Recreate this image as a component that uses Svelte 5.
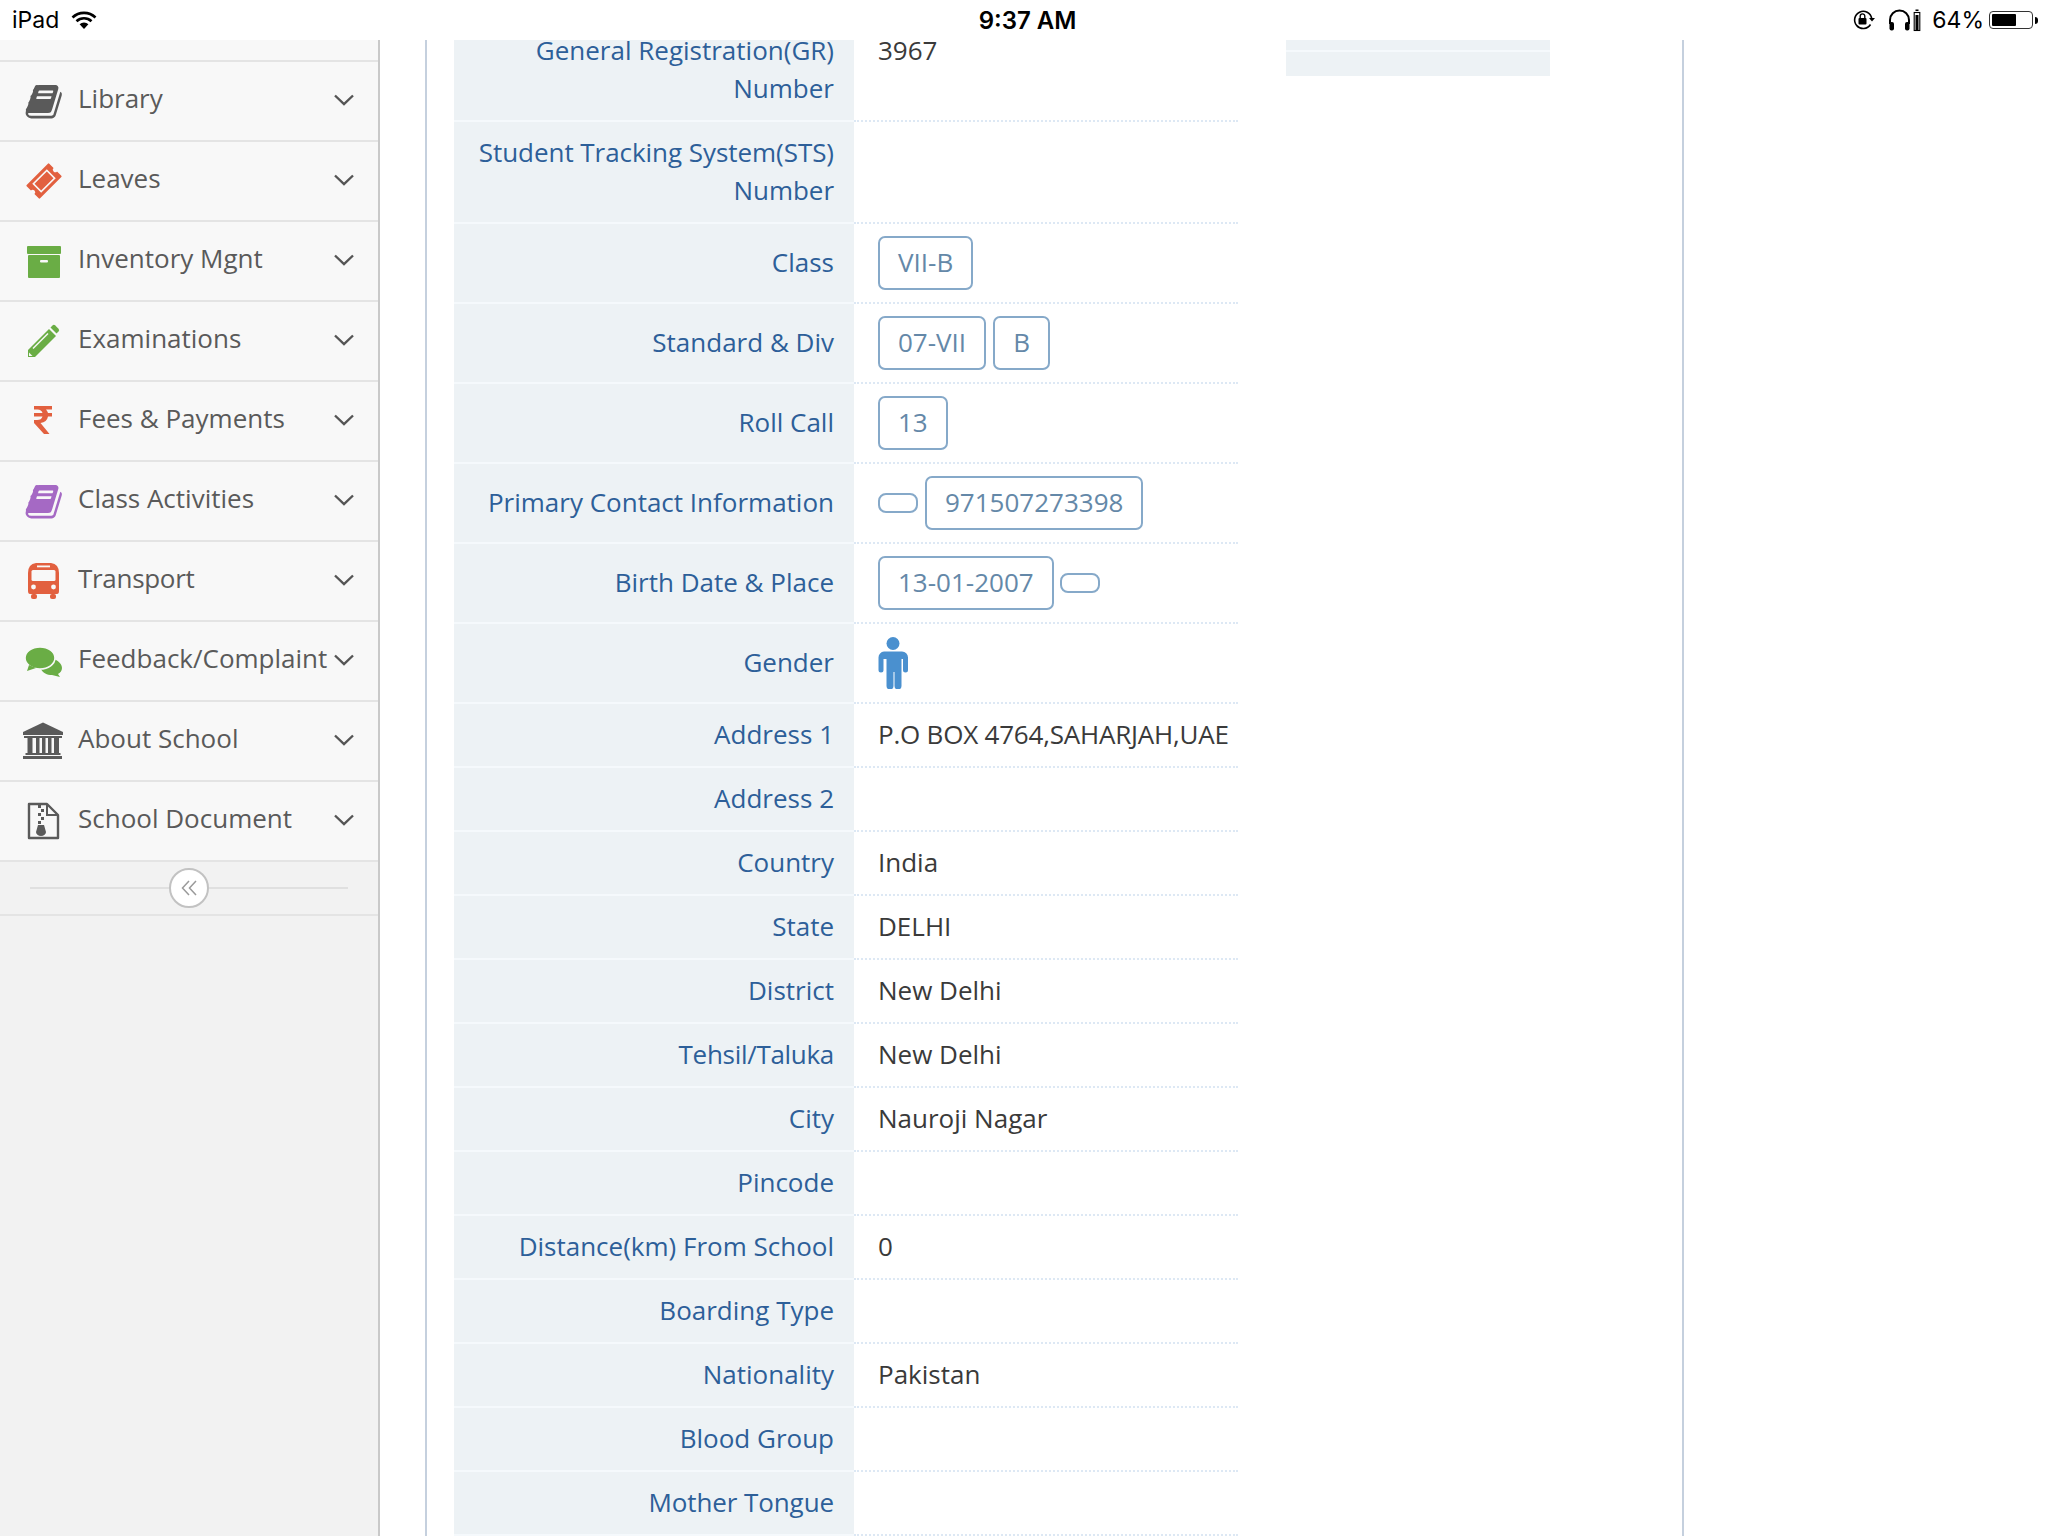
<script lang="ts">
  const menu = [
    { label: 'Library', icon: 'book', color: '#5a5a5a' },
    { label: 'Leaves', icon: 'ticket', color: '#e2603f' },
    { label: 'Inventory Mgnt', icon: 'archive', color: '#6aad45' },
    { label: 'Examinations', icon: 'pencil', color: '#6aad45' },
    { label: 'Fees & Payments', icon: 'inr', color: '#e2603f' },
    { label: 'Class Activities', icon: 'book', color: '#a569c4' },
    { label: 'Transport', icon: 'bus', color: '#e2603f', ls: '-.3px' },
    { label: 'Feedback/Complaint', icon: 'comments', color: '#6aad45' },
    { label: 'About School', icon: 'bank', color: '#5a5a5a' },
    { label: 'School Document', icon: 'zip', color: '#5a5a5a' }
  ];

  const rows = [
    { label: ['General Registration(GR)', 'Number'], value: '3967' },
    { label: ['Student Tracking System(STS)', 'Number'], ls: '-.05px' },
    { label: ['Class'], tags: ['VII-B'] },
    { label: ['Standard & Div'], tags: ['07-VII', 'B'] },
    { label: ['Roll Call'], tags: ['13'] },
    { label: ['Primary Contact Information'], tags: ['', '971507273398'] },
    { label: ['Birth Date & Place'], tags: ['13-01-2007', ''] },
    { label: ['Gender'], male: true },
    { label: ['Address 1'], value: 'P.O BOX 4764,SAHARJAH,UAE', vls: '-.21px' },
    { label: ['Address 2'] },
    { label: ['Country'], value: 'India' },
    { label: ['State'], value: 'DELHI' },
    { label: ['District'], value: 'New Delhi' },
    { label: ['Tehsil/Taluka'], value: 'New Delhi', ls: '-.3px' },
    { label: ['City'], value: 'Nauroji Nagar' },
    { label: ['Pincode'] },
    { label: ['Distance(km) From School'], value: '0' },
    { label: ['Boarding Type'] },
    { label: ['Nationality'], value: 'Pakistan' },
    { label: ['Blood Group'] },
    { label: ['Mother Tongue'], ls: '-.1px' }
  ];
</script>

<div class="page">
  <header class="status">
    <div class="st-left">
      <span>iPad</span>
      <svg class="wifi" width="26" height="20" viewBox="0 0 26 20">
        <path d="M1.5 7.5a16.5 16.5 0 0 1 23 0M5.5 11.2a11 11 0 0 1 15 0" fill="none" stroke="#000" stroke-width="2.6"/>
        <path d="M8.6 14.2a6.4 6.4 0 0 1 8.8 0L13 19z" fill="#000"/>
      </svg>
    </div>
    <div class="st-time">9:37 AM</div>
    <div class="st-right">
      <svg width="24" height="22" viewBox="0 0 24 22">
        <path d="M18.5 15.5a8.6 8.6 0 1 1 1.2-6" fill="none" stroke="#000" stroke-width="1.6"/>
        <path d="M17 9h6l-3 3.4z" fill="#000"/>
        <rect x="6.5" y="9" width="8" height="6.5" rx="1" fill="#000"/>
        <path d="M8.2 9V7.2a2.3 2.3 0 0 1 4.6 0V9" fill="none" stroke="#000" stroke-width="1.4"/>
      </svg>
      <svg class="phones" width="33" height="24" viewBox="0 0 33 24">
        <path d="M2 16v-4a9.5 9.5 0 0 1 19 0v4" fill="none" stroke="#000" stroke-width="2"/>
        <rect x="1.5" y="14" width="4.5" height="8.5" rx="2" fill="#000"/>
        <rect x="17" y="14" width="4.5" height="8.5" rx="2" fill="#000"/>
        <rect x="26.2" y="4.5" width="5.6" height="18" fill="none" stroke="#000" stroke-width="1.1"/>
        <rect x="27.5" y="7" width="3" height="15" fill="#000"/>
        <rect x="27.5" y="1.5" width="3" height="1.5" fill="#000"/>
      </svg>
      <span class="pct">64%</span>
      <div class="battery"><div class="charge" style="width: 64%"></div></div>
      <div class="tip"></div>
    </div>
  </header>

  <div class="main">
    <aside class="sidebar">
      <div class="top-spacer"></div>
      {#each menu as m}
        <div class="item">
          <svg class="ic" width="40" height="40" viewBox="0 0 40 40" fill={m.color}>
            {#if m.icon === 'book'}
              <path transform="translate(1.6 1.2) scale(.0218)" d="M1639 478q40 57 18 129l-275 906q-19 64-76.5 107.5t-122.5 43.5h-923q-77 0-148.5-53.5t-99.5-131.5q-24-67-2-127 0-4 3-27t4-37q1-8-3-21.5t-3-19.5q2-11 8-21t16.5-23.5 16.5-23.5q23-38 45-91.5t30-91.5q3-10 .5-30t-.5-28q3-11 17-28t17-23q21-36 42-92t25-90q1-9-2.5-32t.5-28q4-13 22-30.5t22-22.5q19-26 42.5-84.5t27.5-96.5q1-8-3-25.5t-2-26.5q2-8 9-18t18-23 17-21q8-12 16.5-30.5t15-35 16-36 19.5-32 26.5-23.5 36-11.5 47.5 5.5l-1 3q38-9 51-9h761q74 0 114 56t18 130l-274 906q-36 119-71.5 153.5t-128.5 34.5h-869q-27 0-38 15-11 16-1 43 24 70 144 70h923q29 0 56-15.5t35-41.5l300-987q7-22 5-57 38 15 59 43zm-1064 2q-4 13 2 22.5t20 9.5h608q13 0 25.5-9.5t16.5-22.5l21-64q4-13-2-22.5t-20-9.5h-608q-13 0-25.5 9.5t-16.5 22.5zm-83 256q-4 13 2 22.5t20 9.5h608q13 0 25.5-9.5t16.5-22.5l21-64q4-13-2-22.5t-20-9.5h-608q-13 0-25.5 9.5t-16.5 22.5z"/>
            {:else if m.icon === 'ticket'}
              <g transform="rotate(-45 20 20)">
                <rect x="4" y="10.500" width="32" height="19" rx="1"/>
                <circle cx="4" cy="20" r="2.500" fill="#f8f8f8"/>
                <circle cx="36" cy="20" r="2.500" fill="#f8f8f8"/>
                <rect x="10.500" y="14.500" width="19" height="11" fill="none" stroke="#f8f8f8" stroke-width="1.600"/>
              </g>
            {:else if m.icon === 'archive'}
              <rect x="3" y="5" width="34" height="8" rx="1"/>
              <rect x="4" y="14" width="32" height="23" rx="1"/>
              <rect x="16" y="19" width="8" height="2.400" rx="1" fill="#f8f8f8"/>
            {:else if m.icon === 'pencil'}
              <path d="M4 36V29L25 8l7 7-21 21z"/>
              <path d="M26.500 6.500l2-2a2 2 0 0 1 2.800 0l3.200 3.200a2 2 0 0 1 0 2.800l-2 2z"/>
              <path d="M9 27.500L24 12.500" stroke="#f8f8f8" stroke-width="1.400"/>
              <path d="M5 31.500l3.500 3.500H5z" fill="#f8f8f8"/>
            {:else if m.icon === 'inr'}
              <path d="M10 5h18v3.500h-6q1.500 1.500 2 3.500h4v3.500h-4q-1 5.500-7.500 6.500l9 11h-5.500L10 22v-3h3q4.500 0 5.500-3.500H10V12h8.500q-1-3.500-5-3.500H10z"/>
            {:else if m.icon === 'bus'}
              <path d="M4 30V12Q4 3 12 2H27Q35 3 35 12V30Q35 33 33 33H6Q4 33 4 30z"/>
              <rect x="7" y="33" width="6" height="5" rx="2"/>
              <rect x="26" y="33" width="6" height="5" rx="2"/>
              <rect x="7.500" y="9" width="24" height="11" rx="1.500" fill="#f8f8f8"/>
              <rect x="13" y="4.500" width="13" height="1.800" fill="#f8f8f8"/>
              <circle cx="9.500" cy="26" r="2.400" fill="#f8f8f8"/>
              <circle cx="29.500" cy="26" r="2.400" fill="#f8f8f8"/>
            {:else if m.icon === 'comments'}
              <path d="M29 18c5 1 9 5 9 9 0 3-2 5-4 6l2 3-8-2c-5 0-9-2-11-6l8-5z"/>
              <ellipse cx="16" cy="17" rx="15" ry="11" stroke="#f8f8f8" stroke-width="1.600"/>
              <path d="M5 24l-2 6 9-3z"/>
            {:else if m.icon === 'bank'}
              <path d="M19 1.500L39 11v3H-1v-3z"/>
              <rect x="0" y="15" width="38" height="2"/>
              <rect x="3.500" y="17" width="5" height="15"/>
              <rect x="12" y="17" width="3.500" height="15"/>
              <rect x="18" y="17" width="3.500" height="15"/>
              <rect x="24" y="17" width="3.500" height="15"/>
              <rect x="30" y="17" width="5" height="15"/>
              <rect x="1.500" y="32" width="35" height="2"/>
              <rect x="-1" y="35" width="39" height="3"/>
            {:else if m.icon === 'zip'}
              <path d="M5 3h18l11 11v23H5z" fill="none" stroke={m.color} stroke-width="2.400" stroke-linejoin="round"/>
              <path d="M23 3v11h11" fill="none" stroke={m.color} stroke-width="2"/>
              <path d="M14 4h3v3h-3zM17 8h3v3h-3zM14 12h3v3h-3zM17 16h3v3h-3zM14 20h3v3h-3z"/>
              <path d="M14 24h6l2 7a5 4 0 0 1-10 0z"/>
            {/if}
          </svg>
          <span class="item-label" style:letter-spacing={m.ls}>{m.label}</span>
          <svg class="chev" width="20" height="12" viewBox="0 0 20 12">
            <path d="M1 1.500l9 8.500 9-8.500" fill="none" stroke="#555" stroke-width="2.400"/>
          </svg>
        </div>
      {/each}
      <div class="collapser">
        <span class="ln"></span>
        <span class="circle">
          <svg class="dbl" width="18" height="18" viewBox="0 0 18 18">
            <path d="M8 2L1.500 9 8 16M15 2L8.500 9 15 16" fill="none" stroke="#9a9a9a" stroke-width="1.500"/>
          </svg>
        </span>
        <span class="ln"></span>
      </div>
    </aside>

    <section class="content">
      <div class="table">
        {#each rows as r}
          <div class="row">
            <div class="label" style:letter-spacing={r.ls}>
              {#each r.label as line}<div>{line}</div>{/each}
            </div>
            <div class="value">
              {#if r.value}<span style:letter-spacing={r.vls}>{r.value}</span>{/if}
              {#if r.tags}
                {#each r.tags as t}
                  <span class="tag" class:empty={!t}>{t}</span>
                {/each}
              {/if}
              {#if r.male}
                <svg class="male" width="30" height="52" viewBox="0 0 30 52" fill="#4a90cf">
                  <circle cx="15" cy="6.500" r="6.500"/>
                  <path d="M6 14.500h18a6 6 0 0 1 6 6V33a2.500 2.500 0 0 1-5 0V22h-1.500v27a3.300 3.300 0 0 1-7 0V35h-1v14a3.300 3.300 0 0 1-7 0V22H5.500v11a2.500 2.500 0 0 1-5 0V20.500a6 6 0 0 1 5.500-6z"/>
                </svg>
              {/if}
            </div>
          </div>
        {/each}
      </div>
      <div class="side-panel">
        <div class="sp-a"></div>
        <div class="sp-b"></div>
      </div>
    </section>
  </div>
</div>

<style>
  :global(body) { margin: 0; background: #fff; }
  .page { width: 2048px; height: 1536px; overflow: hidden; font-family: "Open Sans", sans-serif; font-size: 26px; display: flex; flex-direction: column; }

  .status { height: 40px; flex: none; display: grid; grid-template-columns: 1fr auto 1fr; align-items: center; padding: 0 10px 0 12px; font-family: Inter, sans-serif; color: #000; }
  .st-left { display: flex; align-items: center; gap: 12px; font-size: 23px; }
  .wifi { margin-top: -1px; }
  .st-time { margin-left: 5px; font-size: 24px; font-weight: 600; }
  .st-right { display: flex; align-items: center; justify-content: flex-end; font-size: 23px; }
  .phones { margin-left: 12px; }
  .pct { margin-left: 11px; }
  .battery { width: 44px; height: 18px; margin-left: 5px; border: 1.5px solid #333; border-radius: 4px; padding: 2px; box-sizing: border-box; }
  .charge { height: 100%; background: #000; border-radius: 1px; }
  .tip { width: 3px; height: 7px; margin-left: 2px; background: #000; border-radius: 0 3px 3px 0; }

  .main { flex: 1; display: flex; min-height: 0; }

  .sidebar { width: 380px; flex: none; box-sizing: border-box; background: #f2f2f2; border-right: 2px solid #c9c9c9; }
  .top-spacer { height: 20px; background: #f8f8f8; border-bottom: 2px solid #e4e4e4; }
  .item { height: 80px; box-sizing: border-box; display: flex; align-items: center; padding: 0 24px 0 24px; background: #f8f8f8; border-bottom: 2px solid #e4e4e4; color: #5a5a5a; }
  .ic { flex: none; overflow: visible; }
  .item-label { flex: 1; margin: 0 0 6px 14px; white-space: nowrap; }
  .chev { flex: none; margin-bottom: 2px; }
  .collapser { height: 52px; display: flex; align-items: center; padding: 0 30px; border-bottom: 2px solid #e4e4e4; }
  .ln { flex: 1; height: 2px; background: #e0e0e0; }
  .circle { width: 40px; height: 40px; box-sizing: border-box; border: 2px solid #c2c2c2; border-radius: 50%; background: #fff; display: flex; align-items: center; justify-content: center; }
  .dbl { margin-left: 2px; }

  .content { width: 1259px; margin-left: 45px; box-sizing: border-box; border-left: 2px solid #c5d0de; border-right: 2px solid #c5d0de; padding-left: 27px; display: flex; gap: 48px; align-items: flex-start; overflow: hidden; }
  .table { width: 784px; flex: none; margin-top: -20px; }
  .row { display: flex; }
  .label { width: 400px; flex: none; box-sizing: border-box; padding: 11px 20px 13px; display: flex; flex-direction: column; justify-content: center; text-align: right; line-height: 38px; color: #2d5f99; background: #edf2f5; border-bottom: 2px solid #f5f9fc; }
  .value { flex: 1; min-width: 0; box-sizing: border-box; padding: 11px 0 13px 24px; display: flex; gap: 7px; align-items: flex-start; line-height: 38px; color: #3a3a3a; border-bottom: 2px dotted #dde8f4; white-space: nowrap; }
  .tag { height: 54px; margin: 1px 0 -1px; box-sizing: border-box; padding: 0 18px 2px; border: 2px solid #86a9c9; border-radius: 7px; line-height: 48px; color: #6488a8; }
  .tag.empty { width: 40px; height: 20px; padding: 0; align-self: center; border-radius: 8px; }
  .tag.empty:last-child { margin-left: -1px; }
  .male { margin: 2px 0 0; }
  .side-panel { width: 264px; flex: none; }
  .sp-a { height: 10px; background: #edf2f5; border-bottom: 2px solid #f5f9fc; }
  .sp-b { height: 24px; background: #edf2f5; }
</style>
